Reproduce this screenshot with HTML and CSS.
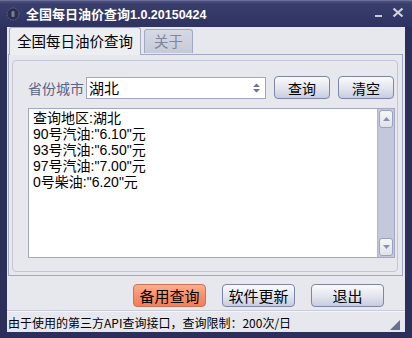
FILE: index.html
```html
<!DOCTYPE html>
<html lang="zh-CN">
<head>
  <meta charset="UTF-8" />
  <meta name="viewport" content="width=device-width, initial-scale=1" />
  <title>全国每日油价查询</title>
  <link rel="stylesheet" href="styles.css">
</head>
<body>

  <div class="window">
    <!-- Title bar -->
    <div class="titlebar">
      <svg class="app-icon" width="14" height="14" viewBox="0 0 14 14">
        <circle cx="7" cy="7" r="6" fill="#2a2e50" stroke="#6a6e88" stroke-width="1" stroke-dasharray="1.5 1.2" />
        <rect x="5.5" y="4" width="3" height="6" rx="1" fill="#7a7e92" />
      </svg>
      <span class="title">全国每日油价查询<b>1.0.20150424</b></span>
      <div class="win-btns">
        <svg width="10" height="10" viewBox="0 0 10 10"><rect x="1" y="7" width="7" height="2" fill="#c8cad8" /></svg>
        <svg width="12" height="11" viewBox="0 0 12 11"><path d="M1.5 1.5 L10.5 9.5 M10.5 1.5 L1.5 9.5" stroke="#d0d2de" stroke-width="2.2" /></svg>
      </div>
    </div>

    <div class="client">
      <!-- Tabs -->
      <div class="tabs">
        <div class="tab active">全国每日油价查询</div>
        <div class="tab">关于</div>
      </div>

      <div class="panel">
        <div class="group">
          <div class="query-row">
            <label class="label">省份城市</label>
            <div class="combo">
              <span>湖北</span>
              <svg class="spin" width="9" height="12" viewBox="0 0 9 12">
                <path d="M1 5 L4.5 1.5 L8 5 Z M1 7 L4.5 10.5 L8 7 Z" fill="#6b7190" />
              </svg>
            </div>
            <button class="btn small">查询</button>
            <button class="btn small">清空</button>
          </div>

          <div class="output">
            <div class="lines">
              <div>查询地区:湖北</div>
              <div>90号汽油:"6.10"元</div>
              <div>93号汽油:"6.50"元</div>
              <div>97号汽油:"7.00"元</div>
              <div>0号柴油:"6.20"元</div>
            </div>
            <div class="scrollbar">
              <div class="sb-btn">
                <svg width="7" height="4" viewBox="0 0 7 4"><path d="M0 4 L3.5 0 L7 4 Z" fill="#8a90ac" /></svg>
              </div>
              <div class="sb-btn">
                <svg width="7" height="4" viewBox="0 0 7 4"><path d="M0 0 L3.5 4 L7 0 Z" fill="#8a90ac" /></svg>
              </div>
            </div>
          </div>
        </div>
      </div>

      <div class="actions">
        <button class="btn big orange">备用查询</button>
        <button class="btn big">软件更新</button>
        <button class="btn big">退出</button>
      </div>

      <div class="status">
        <span>由于使用的第三方API查询接口，查询限制：200次/日</span>
        <svg class="grip" width="10" height="10" viewBox="0 0 10 10"><path d="M10 0 L10 10 L0 10 Z" fill="#6a7090" /></svg>
      </div>
    </div>
  </div>

</body>
</html>
```

FILE: styles.css
```css
body {
  margin: 0;
  padding: 0;
  background: #2a2e58;
  font-family: "Liberation Sans", "Noto Sans CJK SC", sans-serif;
  color: #000;
}

.window {
  width: 412px;
  height: 338px;
  box-sizing: border-box;
  padding: 0 7px 6px 7px;
  background: #2b2f5a;
  display: flex;
  flex-direction: column;
}

.titlebar {
  height: 27px;
  margin: 0 -7px;
  padding: 0 8px 0 6px;
  display: flex;
  align-items: center;
  background: linear-gradient(#4c5180 0px, #3a3e6c 3px, #2e3260 27px);
  border-top: 1px solid #6a6e98;
  box-sizing: border-box;
}

.app-icon {
  margin-right: 6px;
}

.title {
  color: #fff;
  font-size: 13px;
  font-weight: bold;
  font-family: "Noto Sans CJK SC", sans-serif;
  line-height: 1;
  flex: 1;
}

.title b {
  font-family: "Liberation Sans", sans-serif;
  font-size: 12.5px;
}

.win-btns {
  display: flex;
  align-items: center;
  gap: 8px;
  margin-top: -3px;
}

.client {
  flex: 1;
  background: #e6e8ee;
  display: flex;
  flex-direction: column;
}

.tabs {
  height: 27px;
  display: flex;
  align-items: flex-end;
  padding-left: 2px;
  gap: 3px;
  position: relative;
  z-index: 1;
}

.tab {
  width: 49px;
  height: 24px;
  font-size: 14.5px;
  font-family: "Noto Sans CJK SC", sans-serif;
  line-height: 22px;
  text-align: center;
  white-space: nowrap;
  color: #80859c;
  background: linear-gradient(#d6d9e4, #c6cad8);
  border: 1px solid #a4a9c2;
  border-bottom: none;
  border-radius: 3px 3px 0 0;
  box-sizing: border-box;
  margin-bottom: 1px;
}

.tab.active {
  width: 132px;
  height: 28px;
  color: #000;
  background: #eceef2;
  margin-bottom: -1px;
  line-height: 26px;
}

.panel {
  height: 222px;
  margin-left: 1px;
  margin-right: 2px;
  border: 1px solid #a4a9c2;
  background: #e6e8ee;
  box-sizing: border-box;
  padding: 5px 4px 3px 3px;
}

.group {
  height: 100%;
  box-sizing: border-box;
  border: 1px solid #c2c6d6;
  border-radius: 4px;
  padding: 15px 3px 0 15px;
}

.query-row {
  display: flex;
  align-items: center;
  height: 23px;
}

.label {
  font-size: 14px;
  font-family: "Noto Sans CJK SC", sans-serif;
  color: #5c6282;
  width: 58px;
}

.combo {
  width: 180px;
  height: 22px;
  box-sizing: border-box;
  background: #fff;
  border: 1px solid #a2a8c2;
  display: flex;
  align-items: center;
  padding-left: 2px;
  font-size: 15px;
  font-family: "Noto Sans CJK SC", sans-serif;
  margin-right: 8px;
}

.combo span {
  flex: 1;
}

.spin {
  margin-right: 4px;
}

.btn {
  font-family: "Noto Sans CJK SC", sans-serif;
  color: #000;
  background: linear-gradient(#fafbfd, #e4e6ef 50%, #c8ccde);
  border: 1px solid #7e85a8;
  border-radius: 4px;
  padding: 0;
  box-sizing: border-box;
  cursor: pointer;
}

.btn.small {
  width: 56px;
  height: 23px;
  font-size: 14px;
  margin-right: 8px;
}

.btn.small:last-child {
  margin-right: 0;
}

.output {
  margin-top: 9px;
  width: 367px;
  height: 150px;
  box-sizing: border-box;
  border: 1px solid #a2a8c2;
  background: #fff;
  display: flex;
}

.lines {
  flex: 1;
  padding: 1px 4px;
  font-size: 14px;
  line-height: 16px;
}

.lines div {
  height: 16px;
}

.scrollbar {
  width: 17px;
  background: #c4c8da;
  border-left: 1px solid #b0b5ca;
  display: flex;
  flex-direction: column;
  justify-content: space-between;
  padding: 1px 0;
  box-sizing: border-box;
}

.sb-btn {
  height: 16px;
  margin: 0 1px;
  background: linear-gradient(#f6f7fa, #dfe2eb);
  border: 1px solid #9ca2be;
  border-radius: 3px;
  display: flex;
  align-items: center;
  justify-content: center;
}

.actions {
  height: 23px;
  margin-top: 8px;
  display: flex;
  padding-left: 126px;
  gap: 16px;
}

.btn.big {
  width: 73px;
  height: 23px;
  font-size: 15px;
}

.btn.orange {
  background: linear-gradient(#fcae8e, #f8906c 50%, #f27e58);
  border-color: #c8745a;
}

.status {
  margin-top: 4px;
  flex: 1;
  border-top: 1px solid #f4f5f8;
  box-shadow: 0 -1px 0 #c8ccd8;
  display: flex;
  align-items: center;
  padding-left: 1px;
  font-size: 12px;
  font-family: "Noto Sans CJK SC", sans-serif;
  position: relative;
}

.status span {
  flex: 1;
}

.grip {
  margin-right: 5px;
  margin-top: 6px;
}
```
